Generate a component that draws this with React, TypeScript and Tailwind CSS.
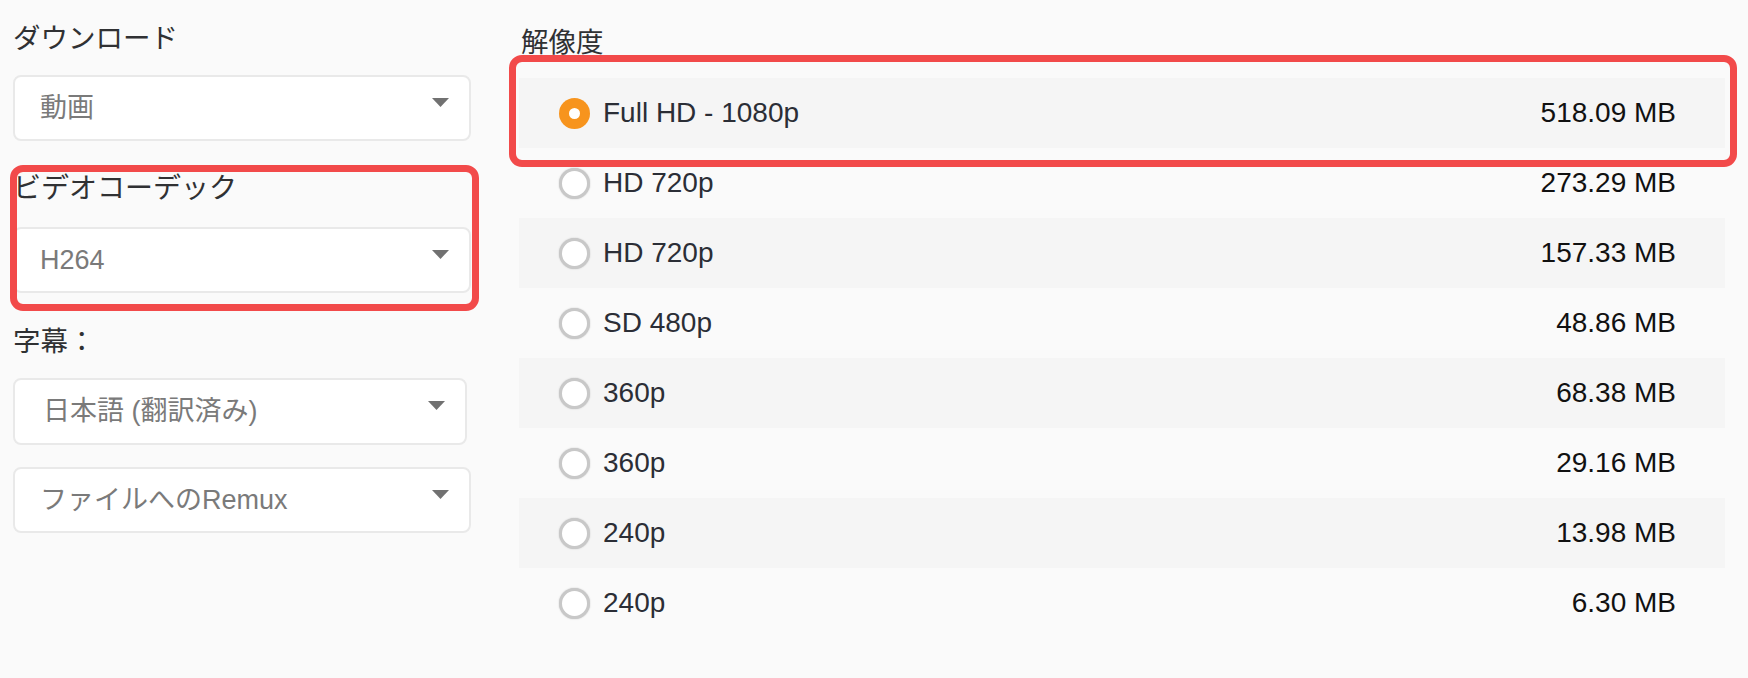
import React from 'react';

const FONT = "font-['Liberation_Sans','Noto_Sans_CJK_JP',sans-serif]";

const rows = [
  { label: 'Full HD - 1080p', size: '518.09 MB', selected: true },
  { label: 'HD 720p', size: '273.29 MB' },
  { label: 'HD 720p', size: '157.33 MB' },
  { label: 'SD 480p', size: '48.86 MB' },
  { label: '360p', size: '68.38 MB' },
  { label: '360p', size: '29.16 MB' },
  { label: '240p', size: '13.98 MB' },
  { label: '240p', size: '6.30 MB' },
];

function Chevron() {
  return (
    <svg width="17" height="9" viewBox="0 0 17 9" className="mb-[12px] shrink-0">
      <path d="M0 0h17l-8.5 9z" fill="#717171" />
    </svg>
  );
}

function Select({ value, className = '' }: { value: string; className?: string }) {
  return (
    <div
      className={`flex items-center justify-between rounded-[8px] border-2 border-[#e9e9e9] bg-white pl-[25px] pr-[20px] ${className}`}
    >
      <span className="text-[27px] leading-none text-[#7a7a7a]">{value}</span>
      <Chevron />
    </div>
  );
}

function Radio({ selected }: { selected?: boolean }) {
  if (selected) {
    return (
      <span className="flex h-[31px] w-[31px] shrink-0 items-center justify-center rounded-full bg-[#f7941d]">
        <span className="h-[11px] w-[11px] rounded-full bg-white" />
      </span>
    );
  }
  return (
    <span className="h-[31px] w-[31px] shrink-0 rounded-full border-[3px] border-[#c8c8c8] bg-white shadow-[0_0_1.5px_#bdbdbd]" />
  );
}

export default function App() {
  return (
    <div className={`relative h-[678px] w-[1748px] overflow-hidden bg-[#fafafa] ${FONT}`}>
      <div className="flex gap-[48px] pl-[13px]">
        {/* left column */}
        <div className="flex w-[458px] flex-col">
          <div className="mt-[21px] text-[27.5px] leading-[36px] text-[#303133]">ダウンロード</div>
          <Select value="動画" className="mt-[18px] h-[66px]" />
          <div className="mt-[30px] text-[28px] leading-[36px] text-[#303133]">ビデオコーデック</div>
          <Select value="H264" className="mt-[20px] h-[66px]" />
          <div className="mt-[31px] text-[27.5px] leading-[36px] text-[#303133]">字幕：</div>
          <Select value="日本語 (翻訳済み)" className="mt-[18px] h-[67px] w-[454px] pl-[28px]" />
          <Select value="ファイルへのRemux" className="mt-[22px] h-[66px] pl-[24px]" />
        </div>

        {/* right column */}
        <div className="flex w-[1206px] flex-col">
          <div className="mt-[25px] pl-[2px] text-[27.5px] leading-[36px] text-[#303133]">解像度</div>
          <div className="mt-[17px] flex flex-col">
            {rows.map((r, i) => (
              <div
                key={i}
                className={`flex h-[70px] items-center pl-[40px] pr-[49px] ${i % 2 === 0 ? 'bg-[#f5f5f5]' : ''}`}
              >
                <Radio selected={r.selected} />
                <span className="ml-[13px] text-[28px] text-[#2b2e36]">{r.label}</span>
                <span className="ml-auto text-[28px] text-[#111111]">{r.size}</span>
              </div>
            ))}
          </div>
        </div>
      </div>

      {/* annotation boxes */}
      <div className="pointer-events-none absolute left-[10px] top-[165px] h-[146px] w-[469px] rounded-[13px] border-[7px] border-[#f24a4a]" />
      <div className="pointer-events-none absolute left-[509px] top-[55px] h-[112px] w-[1228px] rounded-[13px] border-[7px] border-[#f24a4a]" />
    </div>
  );
}
